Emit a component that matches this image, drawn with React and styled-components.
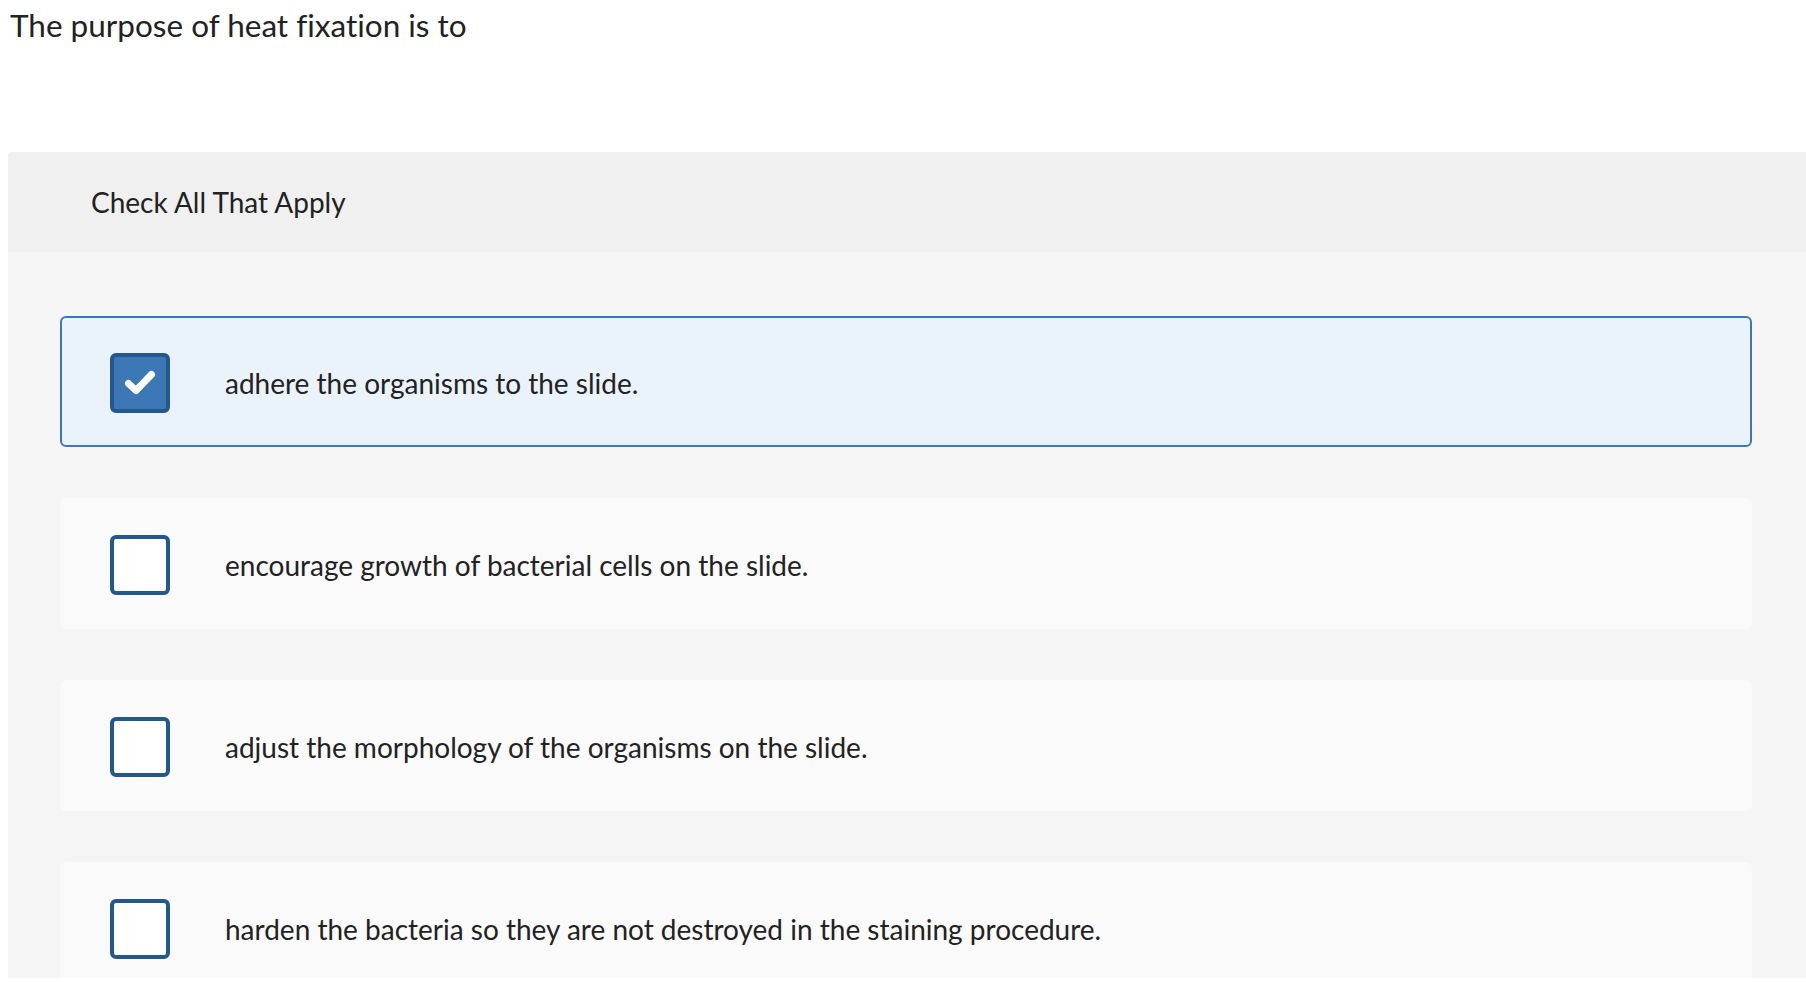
import React from "react";
import styled, { createGlobalStyle } from "styled-components";

const GlobalStyle = createGlobalStyle`
  html, body {
    margin: 0;
    padding: 0;
    background: #ffffff;
    overflow: hidden;
  }
  body {
    font-family: Lato, "Open Sans", Arial, sans-serif;
    font-variant-ligatures: none;
    font-feature-settings: "liga" 0;
    color: #222222;
    -webkit-font-smoothing: antialiased;
  }
`;

const Page = styled.main`
  display: flex;
  flex-direction: column;
  width: 100%;
`;

const Prompt = styled.h1`
  margin: 0;
  padding: 5px 0 0 10px;
  height: 152px;
  box-sizing: border-box;
  font-size: 31.5px;
  line-height: 40px;
  font-weight: 400;
  color: #222222;
`;

const Panel = styled.section`
  margin-left: 8px;
  height: 826px;
  overflow: hidden;
  background: #f5f5f5;
  border-top-left-radius: 4px;
  display: flex;
  flex-direction: column;
`;

const PanelHeader = styled.div`
  flex: none;
  height: 100px;
  display: flex;
  align-items: center;
  padding-left: 83px;
  background: #f0f0f0;
  font-size: 28px;
  line-height: 34px;
  color: #222222;
`;

const OptionList = styled.ul`
  list-style: none;
  margin: 0;
  padding: 64px 54px 0 52px;
  display: flex;
  flex-direction: column;
  gap: 51px;
`;

const Option = styled.li`
  flex: none;
  height: 131px;
  box-sizing: border-box;
  display: flex;
  align-items: center;
  padding: 2px 0 0 48px;
  border: 2px solid ${(p) => (p.$checked ? "#3b78b9" : "transparent")};
  border-radius: 6px;
  background: ${(p) => (p.$checked ? "#eaf2fb" : "#fafafa")};
  cursor: pointer;
`;

const Box = styled.span`
  flex: none;
  width: 60px;
  height: 60px;
  box-sizing: border-box;
  border: 4px solid #23588b;
  border-radius: 6px;
  background: ${(p) => (p.$checked ? "#3c77b6" : "#ffffff")};
  display: flex;
  align-items: center;
  justify-content: center;
`;

const Label = styled.span`
  margin-left: 55px;
  font-size: 28px;
  line-height: 34px;
  color: #222222;
`;

const CheckMark = () => (
  <svg width="32" height="26" viewBox="0 0 32 26" aria-hidden="true">
    <polyline
      points="4.5,13.5 12,20.5 27.5,4.5"
      fill="none"
      stroke="#ffffff"
      strokeWidth="7"
      strokeLinecap="round"
      strokeLinejoin="round"
    />
  </svg>
);

const options = [
  { text: "adhere the organisms to the slide.", checked: true },
  { text: "encourage growth of bacterial cells on the slide.", checked: false },
  { text: "adjust the morphology of the organisms on the slide.", checked: false },
  { text: "harden the bacteria so they are not destroyed in the staining procedure.", checked: false },
];

export default function App() {
  return (
    <Page>
      <GlobalStyle />
      <Prompt>The purpose of heat fixation is to</Prompt>
      <Panel>
        <PanelHeader>Check All That Apply</PanelHeader>
        <OptionList>
          {options.map((o) => (
            <Option key={o.text} $checked={o.checked}>
              <Box $checked={o.checked}>{o.checked && <CheckMark />}</Box>
              <Label>{o.text}</Label>
            </Option>
          ))}
        </OptionList>
      </Panel>
    </Page>
  );
}
